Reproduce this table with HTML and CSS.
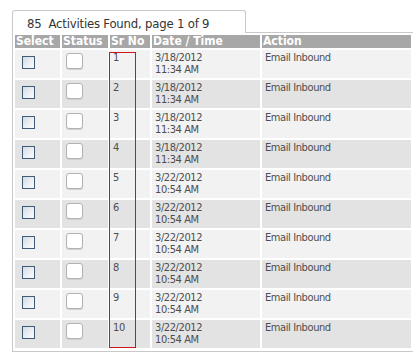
FILE: index.html
```html
<!DOCTYPE html>
<html>
<head>
<meta charset="utf-8">
<link rel="stylesheet" href="styles.css">
</head>
<body>
<div class="wrap">
  <div class="tab">85&nbsp; Activities Found, page 1 of 9</div>
  <div class="panel">
    <table class="grid">
      <colgroup>
        <col class="c-sel"><col class="c-stat"><col class="c-sr"><col class="c-date"><col class="c-act">
      </colgroup>
      <thead>
        <tr><th>Select</th><th>Status</th><th>Sr No</th><th>Date / Time</th><th>Action</th></tr>
      </thead>
      <tbody>
        <tr><td><span class="cb"></span></td><td><span class="st"></span></td><td>1</td><td>3/18/2012<br>11:34 AM</td><td>Email Inbound</td></tr>
        <tr><td><span class="cb"></span></td><td><span class="st"></span></td><td>2</td><td>3/18/2012<br>11:34 AM</td><td>Email Inbound</td></tr>
        <tr><td><span class="cb"></span></td><td><span class="st"></span></td><td>3</td><td>3/18/2012<br>11:34 AM</td><td>Email Inbound</td></tr>
        <tr><td><span class="cb"></span></td><td><span class="st"></span></td><td>4</td><td>3/18/2012<br>11:34 AM</td><td>Email Inbound</td></tr>
        <tr><td><span class="cb"></span></td><td><span class="st"></span></td><td>5</td><td>3/22/2012<br>10:54 AM</td><td>Email Inbound</td></tr>
        <tr><td><span class="cb"></span></td><td><span class="st"></span></td><td>6</td><td>3/22/2012<br>10:54 AM</td><td>Email Inbound</td></tr>
        <tr><td><span class="cb"></span></td><td><span class="st"></span></td><td>7</td><td>3/22/2012<br>10:54 AM</td><td>Email Inbound</td></tr>
        <tr><td><span class="cb"></span></td><td><span class="st"></span></td><td>8</td><td>3/22/2012<br>10:54 AM</td><td>Email Inbound</td></tr>
        <tr><td><span class="cb"></span></td><td><span class="st"></span></td><td>9</td><td>3/22/2012<br>10:54 AM</td><td>Email Inbound</td></tr>
        <tr><td><span class="cb"></span></td><td><span class="st"></span></td><td>10</td><td>3/22/2012<br>10:54 AM</td><td>Email Inbound</td></tr>
      </tbody>
    </table>
    <div class="mark"></div>
  </div>
</div>
</body>
</html>
```
FILE: styles.css
```css
html, body {
  margin: 0;
  padding: 0;
  background: #ffffff;
}
body {
  font-family: "DejaVu Sans Condensed", "DejaVu Sans", "Liberation Sans", sans-serif;
  font-stretch: condensed;
  color: #4e4e4e;
}
.wrap {
  padding: 10px 0 0 12px;
}
.tab {
  display: inline-block;
  position: relative;
  z-index: 1;
  box-sizing: border-box;
  width: 234px;
  height: 23px;
  margin-bottom: -1px;
  padding: 4px 0 0 14px;
  border: 1px solid #c9c9c9;
  border-bottom: none;
  border-radius: 3px 3px 0 0;
  background: #ffffff;
  font-size: 13px;
  line-height: 17px;
  letter-spacing: -0.2px;
  color: #333333;
}
.panel {
  position: relative;
  width: 400px;
  padding-bottom: 1px;
  border: 1px solid #c9c9c9;
  border-right: none;
}
.grid {
  table-layout: fixed;
  width: 400px;
  border-collapse: separate;
  border-spacing: 2px;
  font-size: 11px;
  line-height: 12px;
  letter-spacing: -0.4px;
}
.c-sel { width: 45px; }
.c-stat { width: 46px; }
.c-sr { width: 40px; }
.c-date { width: 108px; }
.c-act { width: 149px; }
.grid th {
  height: 13px;
  padding: 0 1px;
  background: #a7a7a7;
  color: #ffffff;
  font-size: 12px;
  font-weight: bold;
  text-align: left;
  line-height: 13px;
  letter-spacing: 0;
  white-space: nowrap;
  overflow: hidden;
}
.grid td {
  height: 24px;
  padding: 2px 3px;
  vertical-align: top;
  white-space: nowrap;
}
.grid tbody tr:nth-child(odd) td { background: #f2f2f2; }
.grid tbody tr:nth-child(even) td { background: #e3e3e3; }
.cb {
  display: block;
  width: 11px;
  height: 11px;
  margin: 4px 0 0 4px;
  border: 1px solid #3f5b78;
  background: linear-gradient(135deg, #d4dbe3 0%, #eef1f4 60%, #fafafa 100%);
}
.st {
  display: block;
  width: 15px;
  height: 14px;
  margin: 1px 0 0 1px;
  border: 1px solid #b2b2b2;
  border-radius: 3px;
  background: #ffffff;
  box-shadow: 0 1px 0 #d0d0d0;
}
.mark {
  position: absolute;
  left: 96px;
  top: 19px;
  width: 25px;
  height: 294px;
  border: 1px solid #d0141a;
}
```
